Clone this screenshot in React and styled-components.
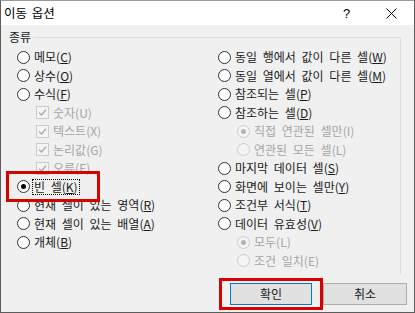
import React from 'react';
import styled, { createGlobalStyle } from 'styled-components';

const GlobalStyle = createGlobalStyle`
  html, body {
    margin: 0;
    padding: 0;
    background: #f0f0f0;
  }
  body {
    font-family: "Noto Sans CJK KR", "Noto Sans", sans-serif;
  }
`;

const Window = styled.div`
  position: relative;
  width: 415px;
  height: 313px;
  box-sizing: border-box;
  border: 1px solid #5c5c5c;
  border-top-color: #9a9a9a;
  background: #f0f0f0;
  display: flex;
  flex-direction: column;
  overflow: hidden;
`;

const TitleBar = styled.div`
  height: 24px;
  background: #fff;
  display: flex;
  align-items: center;
  padding-left: 3px;
  font-size: 12.5px;
  color: #000;
`;

const Title = styled.span`
  flex: 1;
  line-height: 24px;
  word-spacing: 2px;
`;

const TitleButton = styled.div`
  width: 45px;
  height: 24px;
  display: flex;
  align-items: center;
  justify-content: center;
  font-size: 13px;
  font-family: "Liberation Sans", "DejaVu Sans", sans-serif;
  color: #000;
`;

const Body = styled.div`
  flex: 1;
  padding: 0 6px 0 5px;
  display: flex;
  flex-direction: column;
`;

const GroupBox = styled.div`
  position: relative;
  margin-top: 12px;
  width: 395px;
  box-sizing: border-box;
  border-top: 1px solid #dcdcdc;
  border-right: 1px solid #dcdcdc;
  padding: 9.75px 0 4px 11px;
`;

const Legend = styled.span`
  position: absolute;
  top: -10px;
  left: 1px;
  padding: 0 2px;
  background: #f0f0f0;
  font-size: 12px;
  line-height: 18px;
  color: #1a1a1a;
`;

const Columns = styled.div`
  display: grid;
  grid-template-columns: 201px 1fr;
`;

const Column = styled.div`
  display: flex;
  flex-direction: column;
`;

const Row = styled.div`
  height: 18.5px;
  display: flex;
  align-items: center;
  gap: 4px;
  padding-left: ${p => (p.$indent ? 19 : 0)}px;
  font-size: 12px;
  word-spacing: 3px;
  white-space: nowrap;
  color: ${p => (p.$disabled ? '#a6a6a6' : '#1a1a1a')};
`;

const Radio = styled.span`
  width: 13px;
  height: 13px;
  box-sizing: border-box;
  border-radius: 50%;
  border: 1px solid ${p => (p.$disabled ? '#cccccc' : '#333')};
  background: ${p => (p.$disabled ? '#f4f4f4' : '#fff')};
  display: flex;
  align-items: center;
  justify-content: center;
  flex: none;

  &::after {
    content: '';
    display: ${p => (p.$checked ? 'block' : 'none')};
    width: 5px;
    height: 5px;
    border-radius: 50%;
    background: ${p => (p.$disabled ? '#b4b4b4' : '#000')};
  }
`;

const Check = styled.span`
  width: 13px;
  height: 13px;
  box-sizing: border-box;
  border: 1px solid #cccccc;
  background: #f4f4f4;
  display: flex;
  align-items: center;
  justify-content: center;
  flex: none;
`;

const Label = styled.span`
  line-height: 14px;
  padding: 0 1px;
  border: 1px dotted ${p => (p.$focused ? '#000' : 'transparent')};
  margin-left: -2px;
`;

const Accel = styled.span`
  text-decoration: ${p => (p.$disabled ? 'none' : 'underline')};
  text-underline-offset: 1px;
`;

const ButtonRow = styled.div`
  display: flex;
  justify-content: flex-end;
  gap: 11px;
  margin-top: 9px;
  padding-right: 1px;
`;

const Button = styled.button`
  width: ${p => p.$w}px;
  height: 22px;
  box-sizing: border-box;
  background: #e1e1e1;
  border: 1px solid ${p => (p.$default ? '#0078d7' : '#adadad')};
  box-shadow: ${p => (p.$default ? 'inset 0 0 0 1px #e1e1e1' : 'none')};
  font-family: "Noto Sans CJK KR", "Noto Sans", sans-serif;
  font-size: 12px;
  color: #1a1a1a;
  padding: 0;
`;

const Highlight = styled.div`
  position: absolute;
  left: ${p => p.$x}px;
  top: ${p => p.$y}px;
  width: ${p => p.$w}px;
  height: ${p => p.$h}px;
  box-sizing: border-box;
  border: 3px solid #d90000;
  pointer-events: none;
`;

const CheckMark = () => (
  <svg width="9" height="9" viewBox="0 0 9 9">
    <path d="M1 4.6 L3.5 7 L8 1.8" fill="none" stroke="#a8a8a8" strokeWidth="1.3" />
  </svg>
);

const CloseIcon = () => (
  <svg width="11" height="11" viewBox="0 0 11 11">
    <path d="M0.5 0.5 L10.5 10.5 M10.5 0.5 L0.5 10.5" stroke="#000" strokeWidth="1" />
  </svg>
);

const Option = ({ type = 'radio', text, accel, checked, disabled, indent, focused }) => (
  <Row $indent={indent} $disabled={disabled}>
    {type === 'radio' ? (
      <Radio $checked={checked} $disabled={disabled} />
    ) : (
      <Check>{checked && <CheckMark />}</Check>
    )}
    <Label $focused={focused}>
      {text}(<Accel $disabled={disabled}>{accel}</Accel>)
    </Label>
  </Row>
);

const leftOptions = [
  { text: '메모', accel: 'C' },
  { text: '상수', accel: 'O' },
  { text: '수식', accel: 'F' },
  { type: 'check', text: '숫자', accel: 'U', checked: true, disabled: true, indent: true },
  { type: 'check', text: '텍스트', accel: 'X', checked: true, disabled: true, indent: true },
  { type: 'check', text: '논리값', accel: 'G', checked: true, disabled: true, indent: true },
  { type: 'check', text: '오류', accel: 'E', checked: true, disabled: true, indent: true },
  { text: '빈 셀', accel: 'K', checked: true, focused: true },
  { text: '현재 셀이 있는 영역', accel: 'R' },
  { text: '현재 셀이 있는 배열', accel: 'A' },
  { text: '개체', accel: 'B' },
];

const rightOptions = [
  { text: '동일 행에서 값이 다른 셀', accel: 'W' },
  { text: '동일 열에서 값이 다른 셀', accel: 'M' },
  { text: '참조되는 셀', accel: 'P' },
  { text: '참조하는 셀', accel: 'D' },
  { text: '직접 연관된 셀만', accel: 'I', checked: true, disabled: true, indent: true },
  { text: '연관된 모든 셀', accel: 'L', disabled: true, indent: true },
  { text: '마지막 데이터 셀', accel: 'S' },
  { text: '화면에 보이는 셀만', accel: 'Y' },
  { text: '조건부 서식', accel: 'T' },
  { text: '데이터 유효성', accel: 'V' },
  { text: '모두', accel: 'L', checked: true, disabled: true, indent: true },
  { text: '조건 일치', accel: 'E', disabled: true, indent: true },
];

export default function App() {
  return (
    <>
      <GlobalStyle />
      <Window>
        <TitleBar>
          <Title>이동 옵션</Title>
          <TitleButton>?</TitleButton>
          <TitleButton>
            <CloseIcon />
          </TitleButton>
        </TitleBar>
        <Body>
          <GroupBox>
            <Legend>종류</Legend>
            <Columns>
              <Column>
                {leftOptions.map(o => (
                  <Option key={o.text} {...o} />
                ))}
              </Column>
              <Column>
                {rightOptions.map(o => (
                  <Option key={o.text} {...o} />
                ))}
              </Column>
            </Columns>
          </GroupBox>
          <ButtonRow>
            <Button $w={82} $default>확인</Button>
            <Button $w={84}>취소</Button>
          </ButtonRow>
        </Body>
        <Highlight $x={5} $y={170} $w={94} $h={31} />
        <Highlight $x={218} $y={277} $w={104} $h={32} />
      </Window>
    </>
  );
}
